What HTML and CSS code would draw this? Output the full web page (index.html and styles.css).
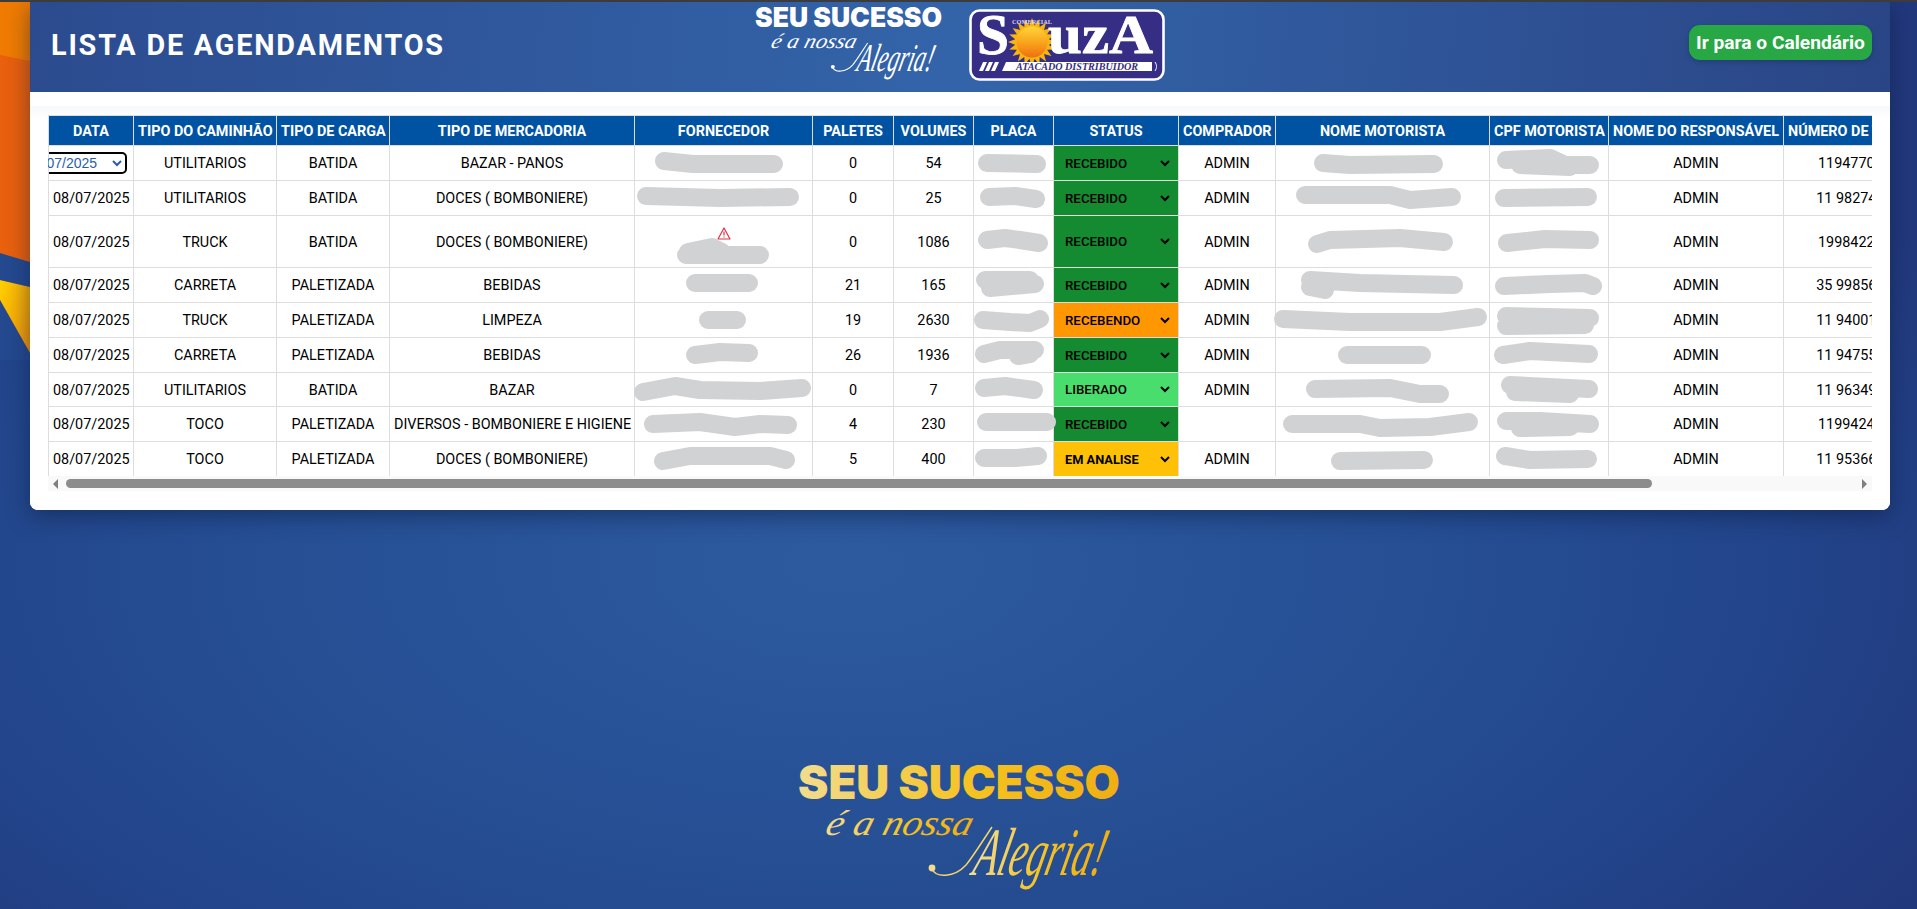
FILE: index.html
```html
<!DOCTYPE html>
<html lang="pt-BR">
<head>
<meta charset="utf-8">
<title>Lista de Agendamentos</title>
<link rel="stylesheet" href="styles.css">
</head>
<body>
<svg class="bg-shapes" viewBox="0 0 30 360" preserveAspectRatio="none" aria-hidden="true">
  <defs>
    <linearGradient id="gYellow" x1="0" y1="0" x2="1" y2="1"><stop offset="0" stop-color="#ffd000"/><stop offset="1" stop-color="#ee8f0a"/></linearGradient>
  </defs>
  <rect x="0" y="0" width="30" height="360" fill="#ef7b02"/>
  <polygon points="0,55 30,61 30,262 0,253" fill="#e9600e"/>
  <polygon points="0,280 30,287 30,353 0,300" fill="url(#gYellow)"/>
  <polygon points="0,253 30,262 30,287 0,280" fill="#25498f"/>
  <polygon points="0,300 30,353 30,360 0,360" fill="#25498f"/>
</svg>

<main class="card">
  <header class="card-header">
    <h1 class="title">LISTA DE AGENDAMENTOS</h1>
    <div class="logos">
      <svg class="slogan slogan-small" viewBox="0 0 322 129">
        <text class="s-big" x="0" y="34" textLength="322" lengthAdjust="spacingAndGlyphs" fill="#fff">SEU SUCESSO</text>
        <text class="s-script" transform="translate(26 70) skewX(-16)" textLength="146" lengthAdjust="spacingAndGlyphs" fill="#fff">é a nossa</text>
        <path d="M134 104c4 9 22 9 34-4 6-7 14-20 26-38" fill="none" stroke="#fff" stroke-width="1.8"/>
        <circle cx="134" cy="103" r="3.4" fill="#fff"/>
        <text class="s-script2" transform="translate(173 110) skewX(-14)" textLength="130" lengthAdjust="spacingAndGlyphs" fill="#fff">Alegria!</text>
      </svg>
      <svg class="souza" viewBox="0 0 196 72">
        <defs>
          <linearGradient id="gSun" x1="0" y1="0" x2="0" y2="1"><stop offset="0" stop-color="#ffd43a"/><stop offset=".55" stop-color="#f9a11b"/><stop offset="1" stop-color="#ee6f12"/></linearGradient>
        </defs>
        <rect x="1.5" y="1.5" width="193" height="69" rx="9" fill="#362d85" stroke="#fff" stroke-width="2.6"/>
        <g transform="translate(63 33)">
          <polygon fill="#f8b50f" points="24,0 16.8,2.65 22.8,7.4 15.1,7.7 19.4,14.1 12,12 14.1,19.4 7.7,15.1 7.4,22.8 2.65,16.8 0,24 -2.65,16.8 -7.4,22.8 -7.7,15.1 -14.1,19.4 -12,12 -19.4,14.1 -15.1,7.7 -22.8,7.4 -16.8,2.65 -24,0 -16.8,-2.65 -22.8,-7.4 -15.1,-7.7 -19.4,-14.1 -12,-12 -14.1,-19.4 -7.7,-15.1 -7.4,-22.8 -2.65,-16.8 0,-24 2.65,-16.8 7.4,-22.8 7.7,-15.1 14.1,-19.4 12,-12 19.4,-14.1 15.1,-7.7 22.8,-7.4 16.8,-2.65"/>
          <circle r="15.5" fill="url(#gSun)"/>
        </g>
        <text class="z-big z-s" x="8" y="45" textLength="32" lengthAdjust="spacingAndGlyphs">S</text>
        <text class="z-big z-uza" x="79" y="44" textLength="105" lengthAdjust="spacingAndGlyphs">uzA</text>
        <text class="z-com" x="43" y="14.5" textLength="40" lengthAdjust="spacingAndGlyphs">COMERCIAL</text>
        <polygon points="14,53 18,53 14,62 10,62" fill="#fff"/>
        <polygon points="20,53 24,53 20,62 16,62" fill="#fff"/>
        <polygon points="26,53 30,53 26,62 22,62" fill="#fff"/>
        <polygon points="37,53 183,53 183,62 33,62" fill="#fff"/>
        <path d="M186 53c2 3 2 6 0 9" fill="none" stroke="#fff" stroke-width="1"/>
        <text class="z-bar" x="47" y="60.6" textLength="122" lengthAdjust="spacingAndGlyphs">ATACADO DISTRIBUIDOR</text>
      </svg>
    </div>
    <a class="btn-cal" href="#">Ir para o Calendário</a>
  </header>

  <section class="panel">
    <div class="table-scroll">
      <table class="grid">
        <colgroup>
          <col class="c-data"><col class="c-cam"><col class="c-carga"><col class="c-merc"><col class="c-forn"><col class="c-pal"><col class="c-vol"><col class="c-placa"><col class="c-status"><col class="c-comp"><col class="c-mot"><col class="c-cpf"><col class="c-resp"><col class="c-num">
        </colgroup>
        <thead>
          <tr>
            <th>DATA</th><th>TIPO DO CAMINHÃO</th><th>TIPO DE CARGA</th><th>TIPO DE MERCADORIA</th><th>FORNECEDOR</th><th>PALETES</th><th>VOLUMES</th><th>PLACA</th><th>STATUS</th><th>COMPRADOR</th><th>NOME MOTORISTA</th><th>CPF MOTORISTA</th><th>NOME DO RESPONSÁVEL</th><th>NÚMERO DE TELEFONE</th>
          </tr>
        </thead>
        <tbody>
          <tr>
            <td class="date-cell"><select class="date-select"><option>08/07/2025</option></select></td><td>UTILITARIOS</td><td>BATIDA</td><td>BAZAR - PANOS</td><td></td><td>0</td><td>54</td><td></td>
            <td class="st st-recebido"><select class="st-select"><option>RECEBIDO</option><option>RECEBENDO</option><option>LIBERADO</option><option>EM ANALISE</option></select></td>
            <td>ADMIN</td><td></td><td></td><td>ADMIN</td><td>11947700000</td>
          </tr>
          <tr>
            <td>08/07/2025</td><td>UTILITARIOS</td><td>BATIDA</td><td>DOCES ( BOMBONIERE)</td><td></td><td>0</td><td>25</td><td></td>
            <td class="st st-recebido"><select class="st-select"><option>RECEBIDO</option><option>RECEBENDO</option><option>LIBERADO</option><option>EM ANALISE</option></select></td>
            <td>ADMIN</td><td></td><td></td><td>ADMIN</td><td>11 982740000</td>
          </tr>
          <tr class="row-tall">
            <td>08/07/2025</td><td>TRUCK</td><td>BATIDA</td><td>DOCES ( BOMBONIERE)</td>
            <td><svg class="warn" viewBox="0 0 14 13" aria-hidden="true"><path d="M7 1 13 12H1Z" fill="none" stroke="#dc3545" stroke-width="1.2" stroke-linejoin="round"/><path d="M7 4.5v4M7 9.6v1" stroke="#dc3545" stroke-width="1.2"/></svg></td>
            <td>0</td><td>1086</td><td></td>
            <td class="st st-recebido"><select class="st-select"><option>RECEBIDO</option><option>RECEBENDO</option><option>LIBERADO</option><option>EM ANALISE</option></select></td>
            <td>ADMIN</td><td></td><td></td><td>ADMIN</td><td>19984220000</td>
          </tr>
          <tr>
            <td>08/07/2025</td><td>CARRETA</td><td>PALETIZADA</td><td>BEBIDAS</td><td></td><td>21</td><td>165</td><td></td>
            <td class="st st-recebido"><select class="st-select"><option>RECEBIDO</option><option>RECEBENDO</option><option>LIBERADO</option><option>EM ANALISE</option></select></td>
            <td>ADMIN</td><td></td><td></td><td>ADMIN</td><td>35 998560000</td>
          </tr>
          <tr>
            <td>08/07/2025</td><td>TRUCK</td><td>PALETIZADA</td><td>LIMPEZA</td><td></td><td>19</td><td>2630</td><td></td>
            <td class="st st-recebendo"><select class="st-select"><option>RECEBENDO</option><option>RECEBIDO</option><option>LIBERADO</option><option>EM ANALISE</option></select></td>
            <td>ADMIN</td><td></td><td></td><td>ADMIN</td><td>11 940010000</td>
          </tr>
          <tr>
            <td>08/07/2025</td><td>CARRETA</td><td>PALETIZADA</td><td>BEBIDAS</td><td></td><td>26</td><td>1936</td><td></td>
            <td class="st st-recebido"><select class="st-select"><option>RECEBIDO</option><option>RECEBENDO</option><option>LIBERADO</option><option>EM ANALISE</option></select></td>
            <td>ADMIN</td><td></td><td></td><td>ADMIN</td><td>11 947550000</td>
          </tr>
          <tr class="row-short">
            <td>08/07/2025</td><td>UTILITARIOS</td><td>BATIDA</td><td>BAZAR</td><td></td><td>0</td><td>7</td><td></td>
            <td class="st st-liberado"><select class="st-select"><option>LIBERADO</option><option>RECEBIDO</option><option>RECEBENDO</option><option>EM ANALISE</option></select></td>
            <td>ADMIN</td><td></td><td></td><td>ADMIN</td><td>11 963490000</td>
          </tr>
          <tr>
            <td>08/07/2025</td><td>TOCO</td><td>PALETIZADA</td><td>DIVERSOS - BOMBONIERE E HIGIENE</td><td></td><td>4</td><td>230</td><td></td>
            <td class="st st-recebido"><select class="st-select"><option>RECEBIDO</option><option>RECEBENDO</option><option>LIBERADO</option><option>EM ANALISE</option></select></td>
            <td></td><td></td><td></td><td>ADMIN</td><td>11994240000</td>
          </tr>
          <tr>
            <td>08/07/2025</td><td>TOCO</td><td>PALETIZADA</td><td>DOCES ( BOMBONIERE)</td><td></td><td>5</td><td>400</td><td></td>
            <td class="st st-analise"><select class="st-select st-bold"><option>EM ANALISE</option><option>RECEBIDO</option><option>RECEBENDO</option><option>LIBERADO</option></select></td>
            <td>ADMIN</td><td></td><td></td><td>ADMIN</td><td>11 953660000</td>
          </tr>
        </tbody>
      </table>
      <svg class="redact" viewBox="48 115 1824 361" preserveAspectRatio="none" aria-hidden="true">
        <g class="redact-g">
          <path d="M664 161 693 164H774"/>
          <path d="M646 196 720 198 790 197"/>
          <path d="M686 255H760M688 252 712 247 722 252"/>
          <path d="M695 283H749"/>
          <path d="M708 320H737"/>
          <path d="M695 355 720 352 749 353"/>
          <path d="M643 392 675 386 700 390 760 391 802 388"/>
          <path d="M653 424 700 422 735 427 760 424 788 425"/>
          <path d="M663 461 690 456 770 456 786 460"/>

          <path d="M987 163 1037 164"/>
          <path d="M989 197 1015 196 1036 199"/>
          <path d="M987 240 1005 238 1020 240 1039 243"/>
          <path d="M985 280H1030M990 288 1035 284"/>
          <path d="M983 320 1010 322 1030 323 1040 319"/>
          <path d="M984 354 1000 350H1035M1018 356 1030 354"/>
          <path d="M984 388 1005 386 1034 390"/>
          <path d="M986 422H1047"/>
          <path d="M984 458 1015 458 1038 456"/>

          <path d="M1323 163 1350 165 1434 164"/>
          <path d="M1305 195H1390L1410 200 1452 197"/>
          <path d="M1317 244 1330 240 1400 238 1444 242"/>
          <path d="M1310 280 1360 283 1454 285M1310 287 1325 290"/>
          <path d="M1283 319 1350 322 1440 322 1478 317"/>
          <path d="M1347 355H1422"/>
          <path d="M1315 389 1390 388 1420 394 1440 394"/>
          <path d="M1292 424H1360L1380 428 1430 427 1469 422"/>
          <path d="M1340 461 1424 460"/>

          <path d="M1506 160 1550 158 1565 165 1590 165M1520 165 1570 167"/>
          <path d="M1504 198 1588 197"/>
          <path d="M1507 243 1545 239 1590 240"/>
          <path d="M1504 286 1550 284 1585 283 1593 286"/>
          <path d="M1506 316 1590 318M1506 326 1585 325"/>
          <path d="M1503 355 1530 351 1589 354"/>
          <path d="M1510 385 1589 389M1515 392 1570 394"/>
          <path d="M1506 421H1540L1590 424M1520 428 1570 427"/>
          <path d="M1505 456 1530 460 1588 459"/>
        </g>
      </svg>
    </div>
    <div class="hbar">
      <span class="arrow arrow-left"></span>
      <span class="hbar-track"><span class="hbar-thumb"></span></span>
      <span class="arrow arrow-right"></span>
    </div>
  </section>
</main>

<footer class="page-foot">
  <svg class="slogan slogan-large" viewBox="0 0 322 129">
    <defs>
      <linearGradient id="gGold" x1="0" y1="0" x2="1" y2="0"><stop offset="0" stop-color="#f2dc8e"/><stop offset=".55" stop-color="#f5c220"/><stop offset="1" stop-color="#f0ae12"/></linearGradient>
    </defs>
    <text class="s-big" x="0" y="34" textLength="322" lengthAdjust="spacingAndGlyphs" fill="url(#gGold)">SEU SUCESSO</text>
    <text class="s-script" transform="translate(26 70) skewX(-16)" textLength="146" lengthAdjust="spacingAndGlyphs" fill="url(#gGold)">é a nossa</text>
    <path d="M134 104c4 9 22 9 34-4 6-7 14-20 26-38" fill="none" stroke="#f5d668" stroke-width="1.5"/>
    <circle cx="134" cy="103" r="3.4" fill="#f2dc8e"/>
    <text class="s-script2" transform="translate(173 110) skewX(-14)" textLength="130" lengthAdjust="spacingAndGlyphs" fill="url(#gGold)">Alegria!</text>
  </svg>
</footer>
</body>
</html>
```
FILE: styles.css
```css
* { box-sizing: border-box; }
html, body { height: 100%; }
body {
  margin: 0;
  height: 909px;
  overflow: hidden;
  position: relative;
  border-top: 2px solid #3c3c3c;
  font-family: Roboto, "Liberation Sans", sans-serif;
  color: #000;
  background: radial-gradient(ellipse 1250px 640px at 44% 62%, #2d5a9f 0%, #264f94 45%, #22448a 75%, #22387c 100%);
  display: flex;
  flex-direction: column;
}
.bg-shapes {
  position: absolute;
  left: 0;
  top: -2px;
  width: 30px;
  height: 360px;
}
.card {
  position: relative;
  margin: 0 27px 0 30px;
  background: #fff;
  border-radius: 0 0 8px 8px;
  box-shadow: 0 6px 22px rgba(10, 25, 60, .5);
  overflow: hidden;
}
.card-header {
  height: 90px;
  display: grid;
  grid-template-columns: 1fr auto 1fr;
  align-items: center;
  padding: 0 18px 0 21px;
  background: linear-gradient(95deg, #2c4b8f 0%, #3364a9 50%, #2a4586 100%);
}
.title {
  margin: 0 0 5px;
  font-size: 28.8px;
  font-weight: 700;
  letter-spacing: 1.8px;
  color: #fff;
  white-space: nowrap;
}
.logos {
  display: flex;
  align-items: center;
  gap: 27px;
  padding: 0 4px 5px 0;
}
.slogan { display: block; overflow: visible; }
.slogan-small { width: 187px; height: 75px; }
.slogan-large { width: 322px; height: 129px; }
.s-big { font-family: Inter, "Open Sans", sans-serif; font-weight: 900; font-size: 47px; }
.s-script { font-family: "Liberation Serif", serif; font-style: italic; font-size: 36px; }
.s-script2 { font-family: "Liberation Serif", serif; font-style: italic; font-size: 68px; }
.souza { width: 196px; height: 72px; display: block; }
.z-big { font-family: "Liberation Serif", serif; font-weight: 700; fill: #fff; stroke: #fff; stroke-width: .8; }
.z-s { font-size: 56px; }
.z-uza { font-size: 54px; }
.z-com { font-family: "Liberation Serif", serif; font-weight: 700; font-size: 6px; fill: #d9d8ee; }
.z-bar { font-family: "Liberation Serif", serif; font-weight: 700; font-style: italic; font-size: 9.5px; fill: #362d85; }
.btn-cal {
  justify-self: end;
  margin-bottom: 9px;
  width: 183px;
  height: 35px;
  display: flex;
  align-items: center;
  justify-content: center;
  border-radius: 11px;
  background: #28a745;
  color: #fff;
  font-size: 19.2px;
  font-weight: 700;
  text-decoration: none;
  white-space: nowrap;
  box-shadow: 0 2px 5px rgba(0, 0, 0, .18);
}
.panel {
  margin-top: 14px;
  padding: 9px 18px 19px;
  background: linear-gradient(#f6f8fb 0, #fff 12px);
}
.table-scroll {
  position: relative;
  height: 361px;
  overflow: hidden;
}
.grid {
  table-layout: fixed;
  width: 1892px;
  border-collapse: collapse;
  font-size: 14.4px;
  background: #fff;
}
.c-data { width: 85px; }
.c-cam { width: 143px; }
.c-carga { width: 113px; }
.c-merc { width: 245px; }
.c-forn { width: 178px; }
.c-pal { width: 81px; }
.c-vol { width: 80px; }
.c-placa { width: 80px; }
.c-status { width: 125px; }
.c-comp { width: 97px; }
.c-mot { width: 214px; }
.c-cpf { width: 119px; }
.c-resp { width: 175px; }
.c-num { width: 158px; }
.grid th, .grid td {
  border: 1px solid #ddd;
  padding: 1px 4px 0;
  text-align: center;
  white-space: nowrap;
  font-weight: 400;
}
.grid th {
  height: 30px;
  background: #0052a3;
  color: #fff;
  font-weight: 700;
  font-size: 14.4px;
}
.grid td { height: 35px; color: #000; }
.row-tall td { height: 52px; }
.row-short td { height: 34px; }
.warn { display: block; width: 14px; height: 13px; margin: 0 auto 17px; }
.grid .date-cell { padding: 0; text-align: left; }
.date-select {
  display: block;
  margin: -1px 0 0 -28px;
  width: 106px;
  height: 22px;
  border: 2px solid #000;
  border-radius: 5px;
  background: #fff;
  color: #2a5db0;
  font-family: "Liberation Sans", sans-serif;
  font-size: 14px;
  padding: 0;
}
.grid .st { padding: 0; }
.st-recebido { background: #148a31; }
.st-recebendo { background: #ff9800; }
.st-liberado { background: #49dd6d; }
.st-analise { background: #ffc107; }
.st-select {
  display: block;
  width: calc(100% - 5px);
  height: 100%;
  border: 0;
  background: transparent;
  color: #000;
  font-family: Roboto, sans-serif;
  font-size: 13.3px;
  font-weight: 500;
  padding: 0 4px 0 7px;
}
.st-bold { font-weight: 700; font-size: 12.8px; }
.redact {
  position: absolute;
  inset: 0;
  width: 100%;
  height: 100%;
  pointer-events: none;
}
.redact-g path {
  fill: none;
  stroke: #d1d2d4;
  stroke-width: 18;
  stroke-linecap: round;
  stroke-linejoin: round;
}
.hbar {
  height: 15px;
  display: flex;
  align-items: center;
  background: #f9f9f9;
}
.hbar-track {
  flex: 1;
  padding: 0 205px 0 3px;
}
.hbar-thumb {
  display: block;
  height: 9px;
  border-radius: 5px;
  background: #8c8c8c;
}
.arrow {
  width: 15px;
  display: flex;
  justify-content: center;
  flex: none;
}
.arrow::before {
  content: "";
  border-top: 5px solid transparent;
  border-bottom: 5px solid transparent;
}
.arrow-left::before { border-right: 5px solid #7f7f7f; }
.arrow-right::before { border-left: 5px solid #7f7f7f; }
.page-foot {
  flex: 1;
  display: flex;
  justify-content: center;
  padding: 255px 0 0 0;
}
```
